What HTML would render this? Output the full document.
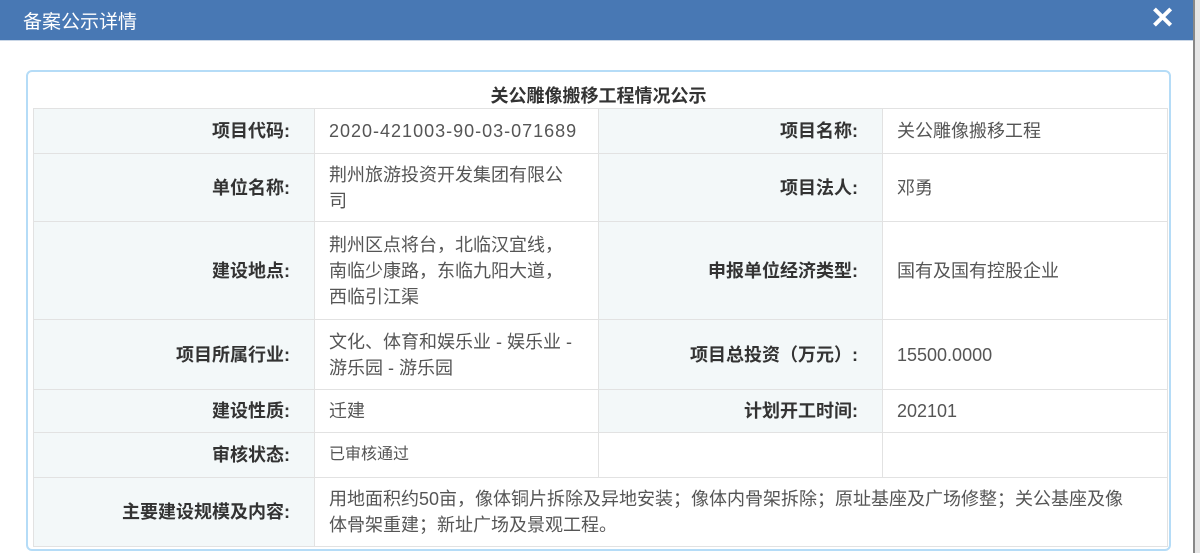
<!DOCTYPE html>
<html><head><meta charset="utf-8"><style>
*{margin:0;padding:0;box-sizing:border-box}
body{width:1200px;height:553px;overflow:hidden;background:#fff;font-family:"Liberation Sans","Noto Sans CJK SC",sans-serif;position:relative}
.hdr{position:absolute;left:0;top:0;width:1193px;height:41px;background:#4878b4;border-bottom:1px solid #c9d6e6}
.hdr span{position:absolute;left:23px;top:7px;color:#fff;font-size:19px}
.x{position:absolute;left:1150px;top:4px;color:#fff;font-size:30px;font-weight:bold;line-height:30px}
.side{position:absolute;left:1193px;top:0;width:7px;height:553px;background:#e6e6e6;border-left:2px solid #888}
.box{position:absolute;left:26px;top:70px;width:1145px;height:481px;border:2px solid #b5dcf7;border-radius:6px}
.title{position:absolute;left:0;top:10px;width:100%;text-align:center;font-weight:bold;font-size:18px;color:#333}
table{position:absolute;left:5px;top:36px;border-collapse:collapse;width:1134px;table-layout:fixed}
td{border:1px solid #e2e2e2;font-size:18px;color:#555;line-height:26px;padding:0 20px 0 14px}
td.l{background:#f3f8f9;text-align:right;font-weight:bold;color:#333;padding-right:24px}
</style></head><body>
<div class="hdr"><span>备案公示详情</span><div class="x">✕</div></div>
<div class="side"></div>
<div class="box">
<div class="title">关公雕像搬移工程情况公示</div>
<table>
<colgroup><col style="width:281px"><col style="width:284px"><col style="width:284px"><col style="width:285px"></colgroup>
<tr style="height:45px"><td class="l">项目代码:</td><td><span style="letter-spacing:1px">2020-421003-90-03-071689</span></td><td class="l">项目名称:</td><td>关公雕像搬移工程</td></tr>
<tr style="height:68px"><td class="l">单位名称:</td><td>荆州旅游投资开发集团有限公司</td><td class="l">项目法人:</td><td>邓勇</td></tr>
<tr style="height:98px"><td class="l">建设地点:</td><td>荆州区点将台，北临汉宜线，南临少康路，东临九阳大道，西临引江渠</td><td class="l">申报单位经济类型:</td><td>国有及国有控股企业</td></tr>
<tr style="height:70px"><td class="l">项目所属行业:</td><td>文化、体育和娱乐业 - 娱乐业 - 游乐园 - 游乐园</td><td class="l">项目总投资（万元）:</td><td>15500.0000</td></tr>
<tr style="height:43px"><td class="l">建设性质:</td><td>迁建</td><td class="l">计划开工时间:</td><td>202101</td></tr>
<tr style="height:45px"><td class="l">审核状态:</td><td style="font-size:16px">已审核通过</td><td></td><td></td></tr>
<tr style="height:69px"><td class="l">主要建设规模及内容:</td><td colspan="3" style="padding-right:34px">用地面积约50亩，像体铜片拆除及异地安装；像体内骨架拆除；原址基座及广场修整；关公基座及像体骨架重建；新址广场及景观工程。</td></tr>
</table>
</div>
</body></html>
